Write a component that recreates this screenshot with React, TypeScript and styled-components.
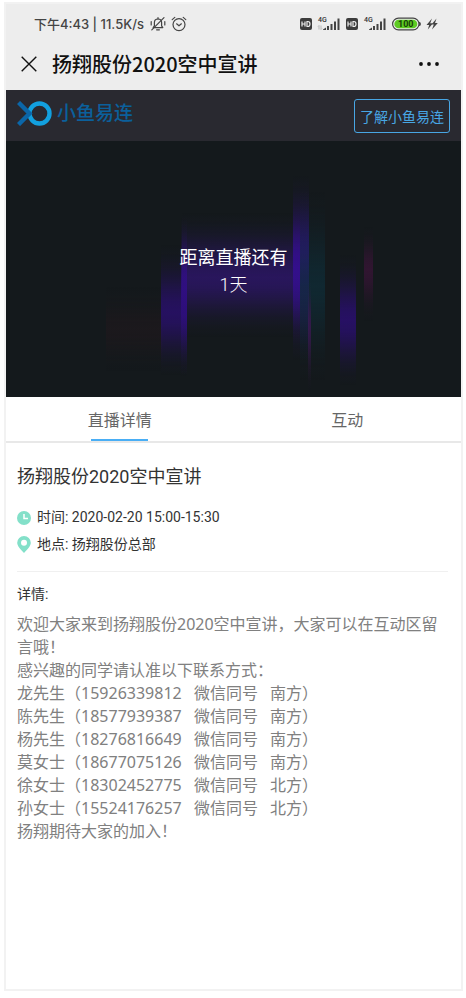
import React from "react";
import styled, { createGlobalStyle } from "styled-components";

const GlobalStyle = createGlobalStyle`
  *, *::before, *::after { box-sizing: border-box; }
  body {
    margin: 0;
    background: #fff;
    color: #333;
    font-family: Roboto, "Noto Sans CJK SC", sans-serif;
  }
  h1, h2, h3, p, ul { margin: 0; padding: 0; font-weight: 400; }
  button { margin: 0; padding: 0; border: 0; background: none; font: inherit; color: inherit; cursor: pointer; }
  svg { display: block; flex: none; }
`;

const Phone = styled.div`
  display: flex;
  flex-direction: column;
  min-height: calc(100vh - 9px);
  margin: 2px 3px 7px 4px;
  border: 2px solid #f2f2f2;
  background: #fff;
`;

const StatusBar = styled.div`
  display: flex;
  align-items: center;
  justify-content: space-between;
  height: 40px;
  padding: 0 23px 0 28px;
  background: #ededed;
  color: #444;
`;

const StatusGroup = styled.div<{ $gap: number }>`
  display: flex;
  align-items: center;
  gap: ${(p) => p.$gap}px;
`;

const StatusText = styled.span`
  font-family: Inter, "Noto Sans CJK SC", sans-serif;
  font-size: 13px;
  font-weight: 500;
  line-height: 20px;
  white-space: nowrap;
`;

const NavBar = styled.header`
  display: flex;
  align-items: center;
  height: 46px;
  padding: 0 21px 6px 15px;
  background: #ededed;
  color: #111;
`;

const NavTitle = styled.h1`
  flex: 1;
  margin-left: 15px;
  font-family: "Noto Sans CJK SC", sans-serif;
  font-size: 20px;
  font-weight: 500;
  line-height: 40px;
`;

const BrandBar = styled.div`
  display: flex;
  align-items: center;
  justify-content: space-between;
  height: 51px;
  padding: 0 11px;
  background: #292930;
`;

const Brand = styled.a`
  display: flex;
  align-items: center;
  gap: 5px;
  margin-bottom: 4px;
  color: #0b609c;
  font-size: 19px;
  font-weight: 500;
  line-height: 26px;
  text-decoration: none;
`;

const LearnButton = styled.button`
  && {
    padding: 2px 5px 0;
    border: 1px solid #48a6e4;
    border-radius: 3px;
    color: #48a6e4;
    font-size: 14px;
    line-height: 30px;
  }
`;

const Stage = styled.section`
  position: relative;
  display: flex;
  align-items: center;
  justify-content: center;
  height: 256px;
  padding-top: 3px;
  overflow: hidden;
  background: #14191c;
`;

const StageArt = styled.svg`
  position: absolute;
  inset: 0;
  width: 100%;
  height: 100%;
`;

const Countdown = styled.p`
  position: relative;
  color: #fff;
  font-size: 18px;
  line-height: 27px;
  text-align: center;
`;

const Days = styled.span`
  display: block;
  font-weight: 300;
`;

const Tabs = styled.div`
  display: grid;
  grid-template-columns: 1fr 1fr;
  height: 46px;
  border-bottom: 2px solid #e8e8e8;
`;

const Tab = styled.button`
  && {
    display: flex;
    flex-direction: column;
    align-items: center;
    justify-content: space-between;
    padding-top: 12px;
    color: #666;
    font-size: 16px;
    line-height: 24px;
  }
`;

const TabLine = styled.span`
  width: 57px;
  height: 2px;
  background: #49aef5;
`;

const Content = styled.main`
  padding: 20px 13px 24px 11px;
`;

const Title = styled.h2`
  font-size: 18px;
  line-height: 28px;
`;

const Facts = styled.ul`
  padding: 13px 0;
  border-bottom: 1px solid #f0f0f0;
  list-style: none;
`;

const Fact = styled.li`
  display: flex;
  align-items: center;
  gap: 6px;
  height: 27px;
  font-size: 14px;
  line-height: 24px;
`;

const FactText = styled.span`
  padding-bottom: 2px;
`;

const Label = styled.h3`
  padding: 12px 0 8px;
  font-size: 14px;
  line-height: 21px;
`;

const Body = styled.div`
  color: #808080;
  font-family: "Noto Sans", "Noto Sans CJK SC", sans-serif;
  font-size: 16px;
  line-height: 23px;
`;

const Note = styled.span`
  margin-left: 8px;
`;

const contacts = [
  ["龙先生", "15926339812", "南方"],
  ["陈先生", "18577939387", "南方"],
  ["杨先生", "18276816649", "南方"],
  ["莫女士", "18677075126", "南方"],
  ["徐女士", "18302452775", "北方"],
  ["孙女士", "15524176257", "北方"],
];

type Beam = { x: number; y: number; w: number; h: number; color: string; peak: number; mid: number };

const beams: Beam[] = [
  { x: 100, y: 145, w: 56, h: 86, color: "#30181f", peak: 0.28, mid: 0.5 },
  { x: 176, y: 72, w: 118, h: 124, color: "#2a1660", peak: 0.95, mid: 0.52 },
  { x: 155, y: 104, w: 26, h: 130, color: "#281068", peak: 0.9, mid: 0.52 },
  { x: 175, y: 76, w: 6, h: 160, color: "#330e8c", peak: 0.75, mid: 0.45 },
  { x: 287, y: 34, w: 16, h: 186, color: "#340f8e", peak: 0.95, mid: 0.5 },
  { x: 294, y: 50, w: 25, h: 190, color: "#0f2d38", peak: 0.75, mid: 0.5 },
  { x: 302, y: 140, w: 3, h: 112, color: "#4a1560", peak: 0.6, mid: 0.4 },
  { x: 334, y: 114, w: 16, h: 130, color: "#281068", peak: 0.95, mid: 0.5 },
  { x: 358, y: 86, w: 9, h: 94, color: "#3a1438", peak: 0.75, mid: 0.45 },
];

const falloff = [0, 0.06, 0.2, 0.42, 0.68, 0.9, 1];

const Beams = () => (
  <StageArt viewBox="0 0 455 256" preserveAspectRatio="xMidYMid slice" aria-hidden="true">
    <defs>
      {beams.map((b, i) => (
        <linearGradient key={i} id={`beam${i}`} x1="0" y1="0" x2="0" y2="1">
          {falloff.map((f, n) => (
            <stop key={`in${n}`} offset={(b.mid * n) / 6} stopColor={b.color} stopOpacity={b.peak * f} />
          ))}
          {falloff.map((_, n) => (
            <stop
              key={`out${n}`}
              offset={b.mid + ((1 - b.mid) * n) / 6}
              stopColor={b.color}
              stopOpacity={b.peak * falloff[6 - n]}
            />
          ))}
        </linearGradient>
      ))}
      <filter id="soften" x="-5%" y="-5%" width="110%" height="110%" colorInterpolationFilters="sRGB">
        <feGaussianBlur stdDeviation="0.6" />
      </filter>
    </defs>
    <g filter="url(#soften)">
      {beams.map((b, i) => (
        <rect key={i} x={b.x} y={b.y} width={b.w} height={b.h} fill={`url(#beam${i})`} />
      ))}
    </g>
  </StageArt>
);

const MutedBell = () => (
  <svg width="16" height="16" viewBox="0 0 16 16" fill="none" stroke="#444" strokeWidth="1.2" strokeLinecap="round">
    <path d="M3.2 11.6h9.6L11.6 9.8V6.6C11.6 4.3 10.2 3 8 3S4.400 4.300 4.400 6.600v3.200z" strokeLinejoin="round" />
    <path d="M6.600 13.800h2.800M8 1.600V3M1.200 5.500v3.500M14.800 5.500v3.500M1.800 13.800 14 1.600" />
  </svg>
);

const AlarmClock = () => (
  <svg width="16" height="16" viewBox="0 0 16 16" fill="none" stroke="#444" strokeWidth="1.2" strokeLinecap="round" strokeLinejoin="round">
    <circle cx="8" cy="8.6" r="6" />
    <path d="m1.200 3.600 2.600-2.200M14.800 3.600 12.200 1.400M5.600 7.800 8 9.800l2.400-2" />
  </svg>
);

const HdBadge = () => (
  <svg width="12" height="12" viewBox="0 0 12 12">
    <rect width="12" height="12" rx="2" fill="#3c3c3c" />
    <path d="M2 3.500v5M5 3.500v5M2 6h3M7 3.500v5h.8c1.500 0 2.200-1 2.200-2.500S9.300 3.500 7.800 3.500z" fill="none" stroke="#ededed" strokeWidth="1.200" />
  </svg>
);

const Signal = ({ arrows }: { arrows?: boolean }) => (
  <svg width="24" height="16" viewBox="0 0 24 16" fill="#444">
    <text x="1" y="6" fontFamily="Roboto, sans-serif" fontSize="7" fontWeight="500" fill="#333">4G</text>
    {arrows && <path d="M2 9.500v4M1 10.500l1-1M4 9.500v4M4 13.500l1-1" stroke="#999" strokeWidth="0.600" fill="none" />}
    <path d="M6 13.500 9 11.500v2.500H6zM10 10h2v4h-2zM13.500 8h2v6h-2zM17 5.500h2V14h-2zM20.500 2.500h2V14h-2z" />
  </svg>
);

const Battery = () => (
  <svg width="29" height="14" viewBox="0 0 29 14">
    <rect x="0.600" y="1.100" width="26.400" height="11.800" rx="5.900" fill="#ededed" stroke="#444" strokeWidth="1.200" />
    <rect x="2.300" y="2.700" width="23" height="8.600" rx="4.300" fill="#5ecb22" />
    <path d="M27.600 5.200c.9.500.9 3.100 0 3.600z" fill="#444" stroke="#444" />
    <text x="13.800" y="10.300" textAnchor="middle" fontFamily="Roboto, sans-serif" fontSize="9" fontWeight="700" fill="#174008">100</text>
  </svg>
);

const Charging = () => (
  <svg width="12" height="12" viewBox="0 0 12 12" fill="#444">
    <path d="M6 .500.500 7h2.700L1.800 11.500 7 5.300H4.200zM10.500.500 5.500 6.500h2.300L6 11.500 11.800 5H9z" />
  </svg>
);

const BrandMark = () => (
  <svg width="35" height="25" viewBox="0 0 35 25" fill="none">
    <circle cx="22.500" cy="12.500" r="10" stroke="#12a0df" strokeWidth="4.400" />
    <path d="M1.500 1.500 12.500 12.500 1.500 23.500" stroke="#0b66a8" strokeWidth="4.400" />
  </svg>
);

export default function App() {
  return (
    <>
      <GlobalStyle />
      <Phone>
        <StatusBar>
          <StatusGroup $gap={6}>
            <StatusText>下午4:43 | 11.5K/s</StatusText>
            <StatusGroup $gap={5}>
              <MutedBell />
              <AlarmClock />
            </StatusGroup>
          </StatusGroup>
          <StatusGroup $gap={5}>
            <HdBadge />
            <Signal arrows />
            <HdBadge />
            <Signal />
            <Battery />
            <Charging />
          </StatusGroup>
        </StatusBar>
        <NavBar>
          <button type="button" aria-label="关闭">
            <svg width="16" height="16" viewBox="0 0 16 16" stroke="#111" strokeWidth="1.400">
              <path d="m.7.700 14.600 14.600M15.300.700.700 15.300" />
            </svg>
          </button>
          <NavTitle>扬翔股份2020空中宣讲</NavTitle>
          <button type="button" aria-label="更多">
            <svg width="22" height="6" viewBox="0 0 22 6" fill="#111">
              <circle cx="3" cy="3" r="1.900" />
              <circle cx="11" cy="3" r="1.900" />
              <circle cx="19" cy="3" r="1.900" />
            </svg>
          </button>
        </NavBar>
        <BrandBar>
          <Brand href="#">
            <BrandMark />
            小鱼易连
          </Brand>
          <LearnButton type="button">了解小鱼易连</LearnButton>
        </BrandBar>
        <Stage>
          <Beams />
          <Countdown>
            距离直播还有
            <Days>1天</Days>
          </Countdown>
        </Stage>
        <Tabs role="tablist">
          <Tab type="button" role="tab" aria-selected="true">
            直播详情
            <TabLine />
          </Tab>
          <Tab type="button" role="tab" aria-selected="false">
            互动
          </Tab>
        </Tabs>
        <Content>
          <Title>扬翔股份2020空中宣讲</Title>
          <Facts>
            <Fact>
              <svg width="14" height="14" viewBox="0 0 14 14">
                <circle cx="7" cy="7" r="7" fill="#83e0c9" />
                <path d="M7 3v4.500h4" fill="none" stroke="#fff" strokeWidth="1.500" />
              </svg>
              <FactText>时间: 2020-02-20 15:00-15:30</FactText>
            </Fact>
            <Fact>
              <svg width="14" height="17" viewBox="0 0 14 17">
                <path fill="#83e0c9" d="M7 0a6.800 6.800 0 0 1 6.800 6.800C13.800 10.200 10 13.800 7 17 4 13.800.200 10.200.200 6.800A6.800 6.800 0 0 1 7 0z" />
                <circle cx="7" cy="6.800" r="3" fill="#fff" />
              </svg>
              <FactText>地点: 扬翔股份总部</FactText>
            </Fact>
          </Facts>
          <Label>详情:</Label>
          <Body>
            <p>欢迎大家来到扬翔股份2020空中宣讲，大家可以在互动区留言哦！</p>
            <p>感兴趣的同学请认准以下联系方式：</p>
            {contacts.map(([name, phone, region]) => (
              <p key={phone}>
                {name}（{phone} <Note>微信同号</Note> <Note>{region}）</Note>
              </p>
            ))}
            <p>扬翔期待大家的加入！</p>
          </Body>
        </Content>
      </Phone>
    </>
  );
}
